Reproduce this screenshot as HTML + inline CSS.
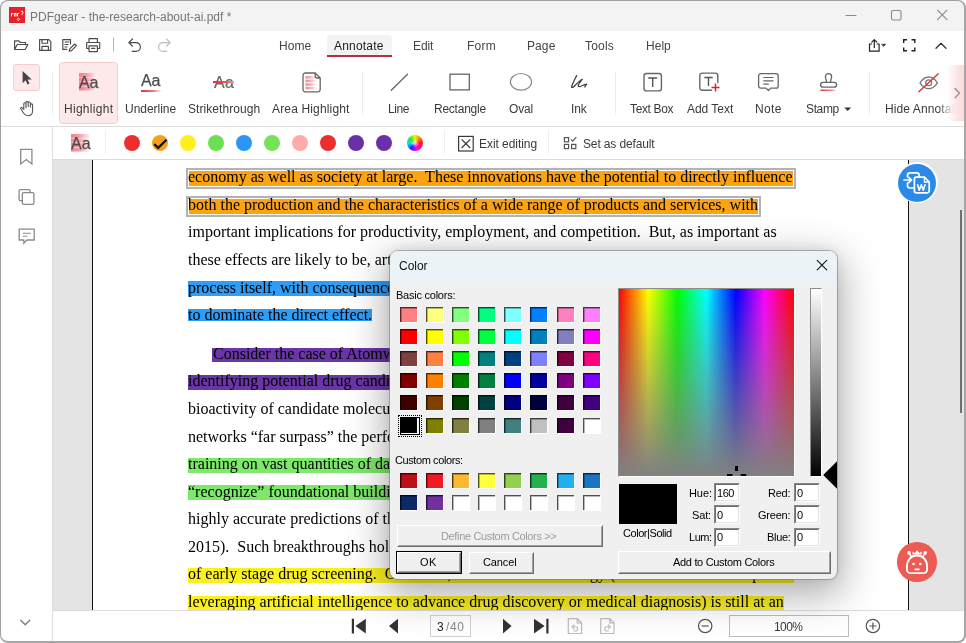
<!DOCTYPE html>
<html>
<head>
<meta charset="utf-8">
<title>PDFgear</title>
<style>
html,body{margin:0;padding:0;background:#fff;}
body{width:966px;height:643px;overflow:hidden;position:relative;font-family:"Liberation Sans",sans-serif;}
#win{position:absolute;left:0;top:0;width:966px;height:643px;background:#fff;overflow:hidden;}
.a{position:absolute;}
.t{position:absolute;white-space:pre;line-height:normal;will-change:transform;}
svg{position:absolute;left:0;top:0;overflow:visible;}
.sw{position:absolute;width:17px;height:15px;box-shadow:inset 1px 1px 0 rgba(0,0,0,.56),inset 2px 2px 0 rgba(0,0,0,.28),1px 1px 0 #fff;}
.inp{position:absolute;box-sizing:border-box;background:#fff;border:1px solid;border-color:#868686 #fdfdfd #fdfdfd #868686;}
.inp i{position:absolute;left:0;top:0;right:0;bottom:0;border:1px solid;border-color:#6a6a6a #e4e4e4 #e4e4e4 #6a6a6a;}
.btn{position:absolute;box-sizing:border-box;background:#f0f0f0;border:1px solid;border-color:#fff #6d6d6d #6d6d6d #fff;}
.btn i{position:absolute;left:0;top:0;right:0;bottom:0;border:1px solid;border-color:#f0f0f0 #a0a0a0 #a0a0a0 #f0f0f0;}
</style>
</head>
<body>
<div id="win">
<div class="a" style="left:0;top:0;width:966px;height:31px;background:#f3f3f3"></div><div class="a" style="left:9px;top:7px;width:16px;height:16px;background:#e3202b"></div><div class="t" style="left:29.80px;top:9.60px;font-size:12px;color:#767676;letter-spacing:-0.003px;font-family:'Liberation Sans',sans-serif;">PDFgear - the-research-about-ai.pdf *</div><div class="a" style="left:327px;top:34.500px;width:65px;height:22px;background:#f3f3f3;border-radius:4px 4px 0 0"></div><div class="a" style="left:327px;top:54.800px;width:65px;height:2.200px;background:#b5303c"></div><div class="t" style="left:279.30px;top:39.00px;font-size:12px;color:#444;letter-spacing:0.095px;font-family:'Liberation Sans',sans-serif;">Home</div><div class="t" style="left:334.30px;top:39.00px;font-size:12px;color:#1c1c1c;letter-spacing:0.183px;font-family:'Liberation Sans',sans-serif;">Annotate</div><div class="t" style="left:413.30px;top:39.00px;font-size:12px;color:#444;letter-spacing:-0.124px;font-family:'Liberation Sans',sans-serif;">Edit</div><div class="t" style="left:467.30px;top:39.00px;font-size:12px;color:#444;letter-spacing:0.267px;font-family:'Liberation Sans',sans-serif;">Form</div><div class="t" style="left:527.30px;top:39.00px;font-size:12px;color:#444;letter-spacing:0.095px;font-family:'Liberation Sans',sans-serif;">Page</div><div class="t" style="left:585.30px;top:39.00px;font-size:12px;color:#444;letter-spacing:0.196px;font-family:'Liberation Sans',sans-serif;">Tools</div><div class="t" style="left:646.30px;top:39.00px;font-size:12px;color:#444;letter-spacing:0.038px;font-family:'Liberation Sans',sans-serif;">Help</div><div class="a" style="left:13px;top:64px;width:27px;height:27px;box-sizing:border-box;background:#fde9e9;border:1px solid #f6cccc;border-radius:3px"></div><div class="a" style="left:59px;top:62px;width:59px;height:62px;box-sizing:border-box;background:#fde9e9;border:1px solid #f6cdcd;border-radius:4px"></div><div class="a" style="left:52px;top:72px;width:1px;height:43px;background:#ececec"></div><div class="a" style="left:362px;top:72px;width:1px;height:43px;background:#ececec"></div><div class="a" style="left:614.5px;top:72px;width:1px;height:43px;background:#ececec"></div><div class="a" style="left:869px;top:72px;width:1px;height:43px;background:#ececec"></div><div class="a" style="left:0;top:126px;width:966px;height:1px;background:#dcdcdc"></div><div class="a" style="left:78.600px;top:73.200px;width:18px;height:18px;background:linear-gradient(to right,rgba(255,255,255,0) 0%,rgba(255,255,255,.25) 45%,rgba(255,255,255,.92) 100%),repeating-linear-gradient(to bottom,#f4808c 0px,#f4808c 3.6px,#f9b4bb 3.6px,#f9b4bb 4.6px)"></div><div class="t" style="left:78.90px;top:73.50px;font-size:16px;color:#4c4c4c;letter-spacing:-0.078px;font-family:'Liberation Sans',sans-serif;-webkit-text-stroke:.25px #4c4c4c;">Aa</div><div class="t" style="left:141.30px;top:72.30px;font-size:16px;color:#4c4c4c;letter-spacing:-0.178px;font-family:'Liberation Sans',sans-serif;-webkit-text-stroke:.25px #4c4c4c;">Aa</div><div class="a" style="left:141px;top:90px;width:20px;height:2px;background:linear-gradient(to right,#e0303c 0%,#ee7a82 60%,rgba(250,200,204,.3) 100%)"></div><div class="t" style="left:214.30px;top:73.80px;font-size:16px;color:#666;letter-spacing:0.222px;font-family:'Liberation Sans',sans-serif;-webkit-text-stroke:.2px #666;">Aa</div><div class="a" style="left:213px;top:81.3px;width:21px;height:1.6px;background:linear-gradient(to right,#e0303c 0%,#e9606a 70%,#f3a2a8 100%)"></div><div class="t" style="left:63.90px;top:101.80px;font-size:12px;color:#3a3a3a;letter-spacing:0.287px;font-family:'Liberation Sans',sans-serif;">Highlight</div><div class="t" style="left:125.10px;top:101.80px;font-size:12px;color:#3a3a3a;letter-spacing:-0.022px;font-family:'Liberation Sans',sans-serif;">Underline</div><div class="t" style="left:188.00px;top:101.80px;font-size:12px;color:#3a3a3a;letter-spacing:0.062px;font-family:'Liberation Sans',sans-serif;">Strikethrough</div><div class="t" style="left:272.00px;top:101.80px;font-size:12px;color:#3a3a3a;letter-spacing:0.156px;font-family:'Liberation Sans',sans-serif;">Area Highlight</div><div class="t" style="left:388.30px;top:101.80px;font-size:12px;color:#3a3a3a;letter-spacing:-0.462px;font-family:'Liberation Sans',sans-serif;">Line</div><div class="t" style="left:434.00px;top:101.80px;font-size:12px;color:#3a3a3a;letter-spacing:-0.241px;font-family:'Liberation Sans',sans-serif;">Rectangle</div><div class="t" style="left:508.60px;top:101.80px;font-size:12px;color:#3a3a3a;letter-spacing:-0.191px;font-family:'Liberation Sans',sans-serif;">Oval</div><div class="t" style="left:571.00px;top:101.80px;font-size:12px;color:#3a3a3a;letter-spacing:-0.150px;font-family:'Liberation Sans',sans-serif;">Ink</div><div class="t" style="left:630.20px;top:101.80px;font-size:12px;color:#3a3a3a;letter-spacing:-0.357px;font-family:'Liberation Sans',sans-serif;">Text Box</div><div class="t" style="left:686.80px;top:101.80px;font-size:12px;color:#3a3a3a;letter-spacing:-0.036px;font-family:'Liberation Sans',sans-serif;">Add Text</div><div class="t" style="left:754.80px;top:101.80px;font-size:12px;color:#3a3a3a;letter-spacing:0.352px;font-family:'Liberation Sans',sans-serif;">Note</div><div class="t" style="left:805.80px;top:101.80px;font-size:12px;color:#3a3a3a;letter-spacing:-0.368px;font-family:'Liberation Sans',sans-serif;">Stamp</div><div class="t" style="left:885.00px;top:101.80px;font-size:12px;color:#3a3a3a;letter-spacing:0.092px;font-family:'Liberation Sans',sans-serif;">Hide Annotations</div><div class="a" style="left:938px;top:65px;width:27px;height:56px;background:linear-gradient(to right,rgba(255,255,255,0) 0%,rgba(255,255,255,.5) 30%,rgba(254,242,242,.9) 50%,#fce4e4 72%,#fbd9d9 100%)"></div><svg width="966" height="643" viewBox="0 0 966 643" fill="none" stroke-linecap="round" stroke-linejoin="round"><g stroke="#fff" stroke-width="1" fill="none"><path d="M11.5 16v-2.5h1.5M14.5 16v-2.5h1M16 13.5v2.5M17.5 16v-2.5h1.2"/><path d="M21 11.5a1.2 1.2 0 1 1 1 2v1.3" stroke="#fbe9b0"/><path d="M17.3 19.2l1.2-1.2 1.2 1.2-1.2 1.2z" stroke-width=".8"/></g><g stroke="#8a8a8a" stroke-width="1.1"><path d="M846 15.5h10"/><rect x="891.5" y="10.5" width="9.5" height="9.5" rx="1.6"/><path d="M937.5 10.2l9.5 9.5M947 10.2l-9.5 9.5"/></g><g stroke="#4a4a4a" stroke-width="1.15"><path d="M14.6 49.5v-8.6h4.2l1.5 1.6h5.2v2.2M14.6 49.5l2.6-5h10.6l-2.6 5z"/><path d="M39.6 39.6h9.2l2 2v8.8h-11.2zM42 39.8v3.4h5.6v-3.4M42 50.2v-3.8h6.4v3.8"/><path d="M70.5 44v-4.4h-7.7v9.8h4M65 42h4M65 44.5h3M65 47h2"/><path d="M69.2 51.2l.6-2.3 4.9-4.9 1.7 1.7-4.9 4.9z"/><path d="M89 42.5v-3.9h8.4v3.9M89 48.5h-2.3v-6h13v6h-2.3M89 45.8h8.4v5.8h-8.4zM91.5 48.3h3.4"/></g><path d="M113.5 38v13" stroke="#b5b5b5" stroke-width="1"/><path d="M132.5 39l-3.7 3.6 3.7 3.6M129 42.6h7a4.4 4.4 0 0 1 0 8.8h-3.8" stroke="#4a4a4a" stroke-width="1.2"/><path d="M166.5 39l3.7 3.6-3.7 3.6M170 42.6h-7a4.4 4.4 0 0 0 0 8.8h3.8" stroke="#bdbdbd" stroke-width="1.2"/><g stroke="#222" stroke-width="1.2"><path d="M871.5 44h-2v7.2h9.6V44h-2M874.3 47.5V39.8M871.8 42.2l2.5-2.6 2.5 2.6"/><path d="M882 44.2h3.6l-1.8 2z" fill="#222" stroke-width=".6"/></g><g stroke="#222" stroke-width="1.4" stroke-linecap="butt" stroke-linejoin="miter"><path d="M903.7 43v-3.3h3.3M911.5 39.7h3.3V43M914.8 47.5v3.3h-3.3M907 50.8h-3.3v-3.3"/></g><path d="M936 48.3l5-5 5 5" stroke="#333" stroke-width="1.3"/><path d="M22.6 71v12.2l3-2.9 1.9 4.2 2-.9-1.9-4.1h4.1z" fill="#444" stroke="none"/><g stroke="#555" stroke-width="1.1"><path d="M23.8 109.5v-5.7a1.1 1.1 0 0 1 2.2 0v4M26 106.5v-4a1.1 1.1 0 0 1 2.2 0v4M28.2 106.5v-3.4a1.1 1.1 0 0 1 2.2 0v3.9M30.4 107v-2a1.1 1.1 0 0 1 2.2 0v5.5c0 3-1.8 5.2-4.6 5.200-2.400 0-3.400-.8-4.600-2.700l-2.600-4.200c-.5-1 .7-1.900 1.600-1l1.400 1.700"/></g><g><rect x="305.5" y="76" width="11" height="2.6" fill="url(#pk)"/><rect x="305.5" y="79.6" width="12" height="2.6" fill="url(#pk)"/><rect x="305.5" y="83.2" width="12" height="2.6" fill="url(#pk)"/><rect x="305.5" y="86.8" width="12" height="2.6" fill="url(#pk)"/></g><defs><linearGradient id="pk" x1="0" x2="1" y1="0" y2="0"><stop offset="0" stop-color="#f18792"/><stop offset=".5" stop-color="#f8b9c0"/><stop offset=".85" stop-color="#fef0f1"/><stop offset="1" stop-color="#ffffff"/></linearGradient></defs><path d="M315.200 73h-10a2.200 2.200 0 0 0-2.200 2.200v14.400a2.200 2.200 0 0 0 2.200 2.200h12.800a2.200 2.200 0 0 0 2.200-2.200V78zM315.200 73v3a2 2 0 0 0 2 2h3" stroke="#666" stroke-width="1.3"/><path d="M391.3 90.300l16.200-16" stroke="#666" stroke-width="1.3"/><rect x="450" y="74.200" width="19.300" height="15.700" stroke="#666" stroke-width="1.3" stroke-linejoin="miter"/><ellipse cx="521" cy="81.800" rx="10.600" ry="8.300" stroke="#8a8a8a" stroke-width="1.2"/><path d="M576.600 75.600C574.500 80 572 84.500 571.500 87C571.600 88 573.500 87.300 575 85.500C577.500 83 580 80.500 582.200 79.300C580.500 81.500 578.300 84 578.200 85.600C578.300 87 580.500 86.600 582 85.800C583.500 85 585.300 84.300 586.600 84.200C585.800 85 585.200 86 584.800 87" stroke="#444" stroke-width="1.300"/><rect x="644" y="73.500" width="17.400" height="17.400" rx="2.400" stroke="#666" stroke-width="1.4"/><path d="M648.200 78h9M652.700 78v9" stroke="#555" stroke-width="1.4" stroke-linecap="butt"/><path d="M711.500 90.300h-9.300a2.400 2.400 0 0 1-2.400-2.400v-12.400a2.400 2.400 0 0 1 2.400-2.400h13.200a2.400 2.400 0 0 1 2.400 2.400v7" stroke="#666" stroke-width="1.4"/><path d="M704.300 77.500h8.400M708.500 77.500v8.500" stroke="#555" stroke-width="1.400" stroke-linecap="butt"/><path d="M715.500 83.500v8M711.500 87.500h8" stroke="#e0202c" stroke-width="1.500" stroke-linecap="butt"/><path d="M760.800 73.700h15.200a2.200 2.200 0 0 1 2.200 2.200v10a2.200 2.200 0 0 1-2.200 2.200h-5.300l-2.300 2.400-2.300-2.400h-5.300a2.200 2.200 0 0 1-2.200-2.200v-10a2.200 2.200 0 0 1 2.200-2.200z" stroke="#666" stroke-width="1.300"/><path d="M763.300 77.500h10.200M763.300 80.800h10.200M763.300 84.100h5.500" stroke="#666" stroke-width="1.200" stroke-linecap="butt"/><path d="M826.300 82.300c.6-2.300-.9-3.300-.9-5.600a3.100 3.100 0 0 1 6.200 0c0 2.300-1.500 3.300-.9 5.600M823 87.200h11.200a2.400 2.400 0 0 0 0-4.900h-11.200a2.400 2.400 0 0 0 0 4.900z" stroke="#666" stroke-width="1.300"/><path d="M820.500 90.300h14.500" stroke="url(#pk2)" stroke-width="1.500" stroke-linecap="butt"/><defs><linearGradient id="pk2" gradientUnits="userSpaceOnUse" x1="820" x2="836" y1="0" y2="0"><stop offset="0" stop-color="#e0303c"/><stop offset=".6" stop-color="#ec707a"/><stop offset="1" stop-color="#fbd0d4"/></linearGradient></defs><path d="M844.300 107.400h6.800l-3.400 3.700z" fill="#333" stroke="none"/><path d="M920 82.800c2.600-4 5.600-5.800 8.700-5.800s6.100 1.800 8.700 5.800c-2.600 4-5.600 5.800-8.700 5.800s-6.100-1.800-8.700-5.800z" stroke="#777" stroke-width="1.300"/><circle cx="928.700" cy="82.800" r="2.900" stroke="#777" stroke-width="1.300"/><path d="M918.800 91.700l19.500-18" stroke="#e0303c" stroke-width="1.400"/></svg><div class="a" style="left:52px;top:127px;width:1px;height:516px;background:#dedede"></div><div class="a" style="left:53px;top:159px;width:912px;height:451px;background:#e4e4e4;overflow:hidden"><div class="a" style="left:38.5px;top:-20px;width:817.5px;height:500px;background:#fff;box-sizing:border-box;border-left:1.5px solid #141414;border-right:1.5px solid #141414"></div><div class="a" style="left:133px;top:9px;width:610px;height:21px;background:#fffdf6;box-sizing:border-box;border:2px solid #b3b3b3"></div><div class="a" style="left:133px;top:36.6px;width:574.7px;height:21px;background:#fffdf6;box-sizing:border-box;border:2px solid #b3b3b3"></div><div class="a" style="left:135.6px;top:11.9px;width:604.5px;height:15.2px;background:#fca311"></div><div class="a" style="left:135.6px;top:39.5px;width:569.2px;height:15.2px;background:#fca311"></div><div class="a" style="left:135px;top:122.32px;width:232px;height:14.3px;background:#2e9df7"></div><div class="a" style="left:135px;top:150.2px;width:184px;height:11.6px;background:#2e9df7"></div><div class="a" style="left:159px;top:188.5px;width:208px;height:14.2px;background:#6a35a8"></div><div class="a" style="left:135px;top:216.18px;width:232px;height:14.7px;background:#6a35a8"></div><div class="a" style="left:135px;top:298.82px;width:232px;height:14.7px;background:#7de86a"></div><div class="a" style="left:135px;top:326.4px;width:232px;height:14.5px;background:#7de86a"></div><div class="a" style="left:135px;top:409.04px;width:606px;height:14.8px;background:#fbf01f"></div><div class="a" style="left:135px;top:436.82px;width:596px;height:14.3px;background:#fbf01f"></div><div class="t" style="left:135.40px;top:9.30px;font-size:16px;color:#000;letter-spacing:0.000px;font-family:'Liberation Serif',serif;">economy as well as society at large.  These innovations have the potential to directly influence</div><div class="t" style="left:135.40px;top:36.88px;font-size:16px;color:#000;letter-spacing:0.000px;font-family:'Liberation Serif',serif;">both the production and the characteristics of a wide range of products and services, with</div><div class="t" style="left:135.40px;top:64.46px;font-size:16px;color:#000;letter-spacing:0.000px;font-family:'Liberation Serif',serif;">important implications for productivity, employment, and competition.  But, as important as</div><div class="t" style="left:135.40px;top:92.04px;font-size:16px;color:#000;letter-spacing:0.000px;font-family:'Liberation Serif',serif;">these effects are likely to be, artificial intelligence also has the potential to change the innovation</div><div class="t" style="left:135.40px;top:119.62px;font-size:16px;color:#000;letter-spacing:0.000px;font-family:'Liberation Serif',serif;">process itself, with consequences that may be equally profound, and which may, over time, come</div><div class="t" style="left:135.40px;top:147.20px;font-size:16px;color:#000;letter-spacing:0.000px;font-family:'Liberation Serif',serif;">to dominate the direct effect.</div><div class="t" style="left:159.90px;top:185.80px;font-size:16px;color:#000;letter-spacing:0.000px;font-family:'Liberation Serif',serif;">Consider the case of Atomwise, a startup firm which is developing novel technology for</div><div class="t" style="left:135.40px;top:213.38px;font-size:16px;color:#000;letter-spacing:0.000px;font-family:'Liberation Serif',serif;">identifying potential drug candidates (and insecticides) by using neural networks to predict the</div><div class="t" style="left:135.40px;top:240.96px;font-size:16px;color:#000;letter-spacing:0.000px;font-family:'Liberation Serif',serif;">bioactivity of candidate molecules.  The company reports that its deep convolutional neural</div><div class="t" style="left:135.40px;top:268.54px;font-size:16px;color:#000;letter-spacing:0.000px;font-family:'Liberation Serif',serif;">networks “far surpass” the performance of conventional “docking” algorithms.  After appropriate</div><div class="t" style="left:135.40px;top:296.12px;font-size:16px;color:#000;letter-spacing:0.000px;font-family:'Liberation Serif',serif;">training on vast quantities of data, the company’s AtomNet product is described as being able to</div><div class="t" style="left:135.40px;top:323.70px;font-size:16px;color:#000;letter-spacing:0.000px;font-family:'Liberation Serif',serif;">“recognize” foundational building blocks of organic chemistry, and is capable of generating</div><div class="t" style="left:135.40px;top:351.28px;font-size:16px;color:#000;letter-spacing:0.000px;font-family:'Liberation Serif',serif;">highly accurate predictions of the outcomes of real-world physical experiments (Wallach et al.,</div><div class="t" style="left:135.40px;top:378.86px;font-size:16px;color:#000;letter-spacing:0.000px;font-family:'Liberation Serif',serif;">2015).  Such breakthroughs hold out the possibility of substantial improvements in the productivity</div><div class="t" style="left:135.40px;top:406.44px;font-size:16px;color:#000;letter-spacing:0.000px;font-family:'Liberation Serif',serif;">of early stage drug screening.  Of course, Atomwise’s technology (and that of other companies</div><div class="t" style="left:135.40px;top:434.02px;font-size:16px;color:#000;letter-spacing:0.000px;font-family:'Liberation Serif',serif;">leveraging artificial intelligence to advance drug discovery or medical diagnosis) is still at an</div></div><div class="a" style="left:960px;top:210px;width:2px;height:203px;background:#6e6e6e"></div><div class="a" style="left:896.600px;top:162px;width:41px;height:41px;border-radius:50%;background:#fff"></div><div class="a" style="left:898.100px;top:163.500px;width:38px;height:38.200px;border-radius:50%;background:#2b8ae8"></div><div class="a" style="left:897.300px;top:542.200px;width:39.500px;height:39.500px;border-radius:50%;background:#ec5b54"></div><div class="a" style="left:53px;top:127px;width:913px;height:32px;background:#fff"></div><div class="a" style="left:53px;top:159px;width:913px;height:1px;background:#dcdcdc"></div><div class="a" style="left:71.100px;top:134.200px;width:18.500px;height:18.200px;background:linear-gradient(to right,rgba(255,255,255,0) 0%,rgba(255,255,255,.25) 45%,rgba(255,255,255,.92) 100%),repeating-linear-gradient(to bottom,#f4808c 0px,#f4808c 3.6px,#f9b4bb 3.6px,#f9b4bb 4.6px)"></div><div class="t" style="left:71.10px;top:134.70px;font-size:16px;color:#4c4c4c;letter-spacing:0.022px;font-family:'Liberation Sans',sans-serif;-webkit-text-stroke:.25px #4c4c4c;">Aa</div><div class="a" style="left:105px;top:131px;width:1px;height:23px;background:#ededed"></div><div class="a" style="left:444.3px;top:131px;width:1px;height:23px;background:#ededed"></div><div class="a" style="left:548px;top:131px;width:1px;height:23px;background:#ededed"></div><div class="a" style="left:124px;top:135px;width:16px;height:16px;border-radius:50%;background:#ee2e2e"></div><div class="a" style="left:152px;top:135px;width:16px;height:16px;border-radius:50%;background:#f5a216"></div><div class="a" style="left:180px;top:135px;width:16px;height:16px;border-radius:50%;background:#ffee1e"></div><div class="a" style="left:208px;top:135px;width:16px;height:16px;border-radius:50%;background:#6cdf52"></div><div class="a" style="left:236px;top:135px;width:16px;height:16px;border-radius:50%;background:#2b96f3"></div><div class="a" style="left:264px;top:135px;width:16px;height:16px;border-radius:50%;background:#74e35a"></div><div class="a" style="left:292px;top:135px;width:16px;height:16px;border-radius:50%;background:#ffabab"></div><div class="a" style="left:320px;top:135px;width:16px;height:16px;border-radius:50%;background:#ee2e2e"></div><div class="a" style="left:348px;top:135px;width:16px;height:16px;border-radius:50%;background:#6b30a8"></div><div class="a" style="left:376px;top:135px;width:16px;height:16px;border-radius:50%;background:#6b30a8"></div><div class="a" style="left:407px;top:135px;width:16px;height:16px;border-radius:50%;background:radial-gradient(circle,rgba(255,255,255,.85) 0%,rgba(255,255,255,0) 38%),conic-gradient(from 0deg,#ffee00,#ff8800 12%,#ff1a1a 24%,#ff00ee 46%,#2222ff 60%,#00ddff 73%,#22ee22 87%,#ffee00)"></div><div class="t" style="left:479.00px;top:136.60px;font-size:12px;color:#3a3a3a;letter-spacing:-0.053px;font-family:'Liberation Sans',sans-serif;">Exit editing</div><div class="t" style="left:582.50px;top:136.60px;font-size:12px;color:#3a3a3a;letter-spacing:-0.134px;font-family:'Liberation Sans',sans-serif;">Set as default</div><div class="a" style="left:53px;top:610px;width:913px;height:33px;background:#fff"></div><div class="a" style="left:53px;top:610px;width:913px;height:1px;background:#dcdcdc"></div><div class="a" style="left:429.500px;top:615px;width:41px;height:21.500px;box-sizing:border-box;border:1px solid #d0d0d0;background:#fff"></div><div class="t" style="left:437.10px;top:619.50px;font-size:12px;color:#222;letter-spacing:0.328px;font-family:'Liberation Sans',sans-serif;">3</div><div class="t" style="left:445.80px;top:619.50px;font-size:12px;color:#8a8a8a;letter-spacing:0.614px;font-family:'Liberation Sans',sans-serif;">/40</div><div class="a" style="left:729px;top:615px;width:120px;height:21.500px;box-sizing:border-box;border:1px solid #bdbdbd;background:#fff"></div><div class="t" style="left:774.30px;top:619.50px;font-size:12px;color:#3a3a3a;letter-spacing:-0.562px;font-family:'Liberation Sans',sans-serif;">100%</div><svg width="966" height="643" viewBox="0 0 966 643" fill="none" stroke-linecap="round" stroke-linejoin="round"><path d="M955 88.500l4.500 4.700-4.500 4.700" stroke="#888" stroke-width="1.200"/><path d="M20.700 149.300h11.200v14.600l-5.600-4.300-5.600 4.300z" stroke="#8a8a8a" stroke-width="1.300" stroke-linejoin="miter"/><g stroke="#8a8a8a" stroke-width="1.300"><rect x="22.300" y="192.700" width="11.600" height="11.600" rx="1.200"/><path d="M22.300 200.600h-2a1.200 1.200 0 0 1-1.200-1.200v-8.600a1.200 1.200 0 0 1 1.200-1.200h8.600a1.200 1.200 0 0 1 1.200 1.200v1.900"/></g><g stroke="#8a8a8a" stroke-width="1.300"><path d="M19.200 229.200h15v10.800h-7.200l-3.200 3.200v-3.200h-4.600z" stroke-linejoin="miter"/><path d="M22.700 233.200h8M22.700 236.200h4.600" stroke-width="1.100" stroke-linecap="butt"/></g><path d="M20.700 620.300l4.500 4.500 4.500-4.500" stroke="#7a7a7a" stroke-width="1.300"/><path d="M154.200 144.200l4 3.700 8.300-8.200" stroke="#111" stroke-width="2.300" stroke-linecap="butt" stroke-linejoin="miter"/><rect x="458.600" y="136.400" width="14.600" height="14.600" stroke="#3a3a3a" stroke-width="1.200" stroke-linejoin="miter"/><path d="M461.600 139.400l8.600 8.600M470.200 139.400l-8.600 8.600" stroke="#3a3a3a" stroke-width="1.200" stroke-linecap="butt"/><g stroke="#555" stroke-width="1.200" stroke-linejoin="miter"><rect x="564.400" y="137.600" width="4.200" height="4.200"/><rect x="564.400" y="144.400" width="4.200" height="4.200"/><rect x="571.600" y="144.400" width="4.200" height="4.200"/><path d="M571 139.300l1.700 1.800 3.600-3.900" stroke-linecap="butt"/></g><g fill="#333" stroke="none"><rect x="351.800" y="618.700" width="2.200" height="14.800"/><path d="M365.800 618.700v14.800l-10.400-7.400z"/><path d="M398 618.700v14.800l-9-7.400z"/><path d="M503 618.700v14.800l8.600-7.400z"/><path d="M534 618.700v14.800l10.600-7.400z"/><rect x="546.300" y="618.700" width="2.200" height="14.800"/></g><g stroke="#bcbcbc" stroke-width="1.200"><path d="M568.300 618.600h9l4.300 4.300v10.600h-13.300zM577.300 618.600v4.300h4.300"/><path d="M574 624.800l-2 2 2 2M572.200 626.800h3.300a2.100 2.100 0 0 1 0 4.200h-1.600" stroke-width="1.100"/><path d="M600.700 618.600h9l4.300 4.300v10.600h-13.300zM609.700 618.600v4.300h4.300"/><path d="M608.300 624.800l2 2-2 2M610.100 626.800h-3.300a2.100 2.100 0 0 0 0 4.200h1.600" stroke-width="1.100"/></g><g stroke="#555" stroke-width="1.200"><circle cx="705.200" cy="626" r="6.700"/><path d="M701.700 626h7" stroke-linecap="butt"/><circle cx="872.900" cy="626" r="6.700"/><path d="M869.400 626h7M872.900 622.500v7" stroke-linecap="butt"/></g><g stroke="#fff" stroke-width="1.700"><path d="M907.500 177v-1.800a2.400 2.400 0 0 1 2.400-2.400h6.800a2.400 2.400 0 0 1 2.400 2.400v1.500M907.500 183.200v2.400a2.400 2.400 0 0 0 2.400 2.400h3.500"/><path d="M904 180h7.300M908.800 177.300l2.800 2.700-2.800 2.700"/><path d="M916.200 177.200h8.200l4.800 4.800v9a1.800 1.800 0 0 1-1.800 1.800h-11.200a1.800 1.800 0 0 1-1.800-1.800v-12a1.800 1.800 0 0 1 1.800-1.800z" fill="#2b8ae8"/><path d="M924.400 177.200v4.800h4.800" stroke-width="1.300"/><path d="M917.600 184.800l1.700 5.400 2-5.400 2 5.400 1.700-5.400" stroke-width="1.600"/></g><path d="M906.900 567c0-7 4-11.500 10.100-11.500s10.100 4.500 10.100 11.500v2.500a3.600 3.600 0 0 1-3.600 3.600h-13a3.600 3.600 0 0 1-3.600-3.600z" stroke="#fff" stroke-width="1.900"/><g fill="#fff" stroke="none"><circle cx="909" cy="552.900" r="1.800"/><circle cx="925.200" cy="552.900" r="1.800"/><path d="M912.500 554.500v-3l2.300 1.500 2.300-2.700 2.300 2.700 2.300-1.500v3z"/><circle cx="913.500" cy="564" r="1.350"/><circle cx="920.300" cy="564" r="1.350"/><rect x="914.400" y="568.400" width="5.200" height="1.900" rx=".4"/></g><path d="M909.600 554l2 3M924.600 554l-2 3" stroke="#fff" stroke-width="1.500"/></svg><div class="a" style="left:390px;top:251px;width:447px;height:327.5px;border-radius:8px;box-shadow:0 0 0 1px rgba(120,120,120,.55),0 12px 38px 6px rgba(0,0,0,.30),0 0 14px rgba(0,0,0,.10);background:#f0f0f0;overflow:hidden"><div class="a" style="left:0;top:0;width:100%;height:36px;background:linear-gradient(to bottom,#ebf3f7 0%,#ebf3f7 72%,#f0f0f0 100%)"></div></div><div class="t" style="left:399.00px;top:259.00px;font-size:12px;color:#111;letter-spacing:-0.022px;font-family:'Liberation Sans',sans-serif;">Color</div><div class="t" style="left:395.80px;top:289.30px;font-size:11px;color:#000;letter-spacing:-0.240px;font-family:'Liberation Sans',sans-serif;">Basic colors:</div><div class="t" style="left:395.30px;top:454.00px;font-size:11px;color:#000;letter-spacing:-0.406px;font-family:'Liberation Sans',sans-serif;">Custom colors:</div><div class="sw" style="left:400px;top:307px;background:#FF8080"></div><div class="sw" style="left:426px;top:307px;background:#FFFF80"></div><div class="sw" style="left:452px;top:307px;background:#80FF80"></div><div class="sw" style="left:478px;top:307px;background:#00FF80"></div><div class="sw" style="left:504px;top:307px;background:#80FFFF"></div><div class="sw" style="left:530px;top:307px;background:#0080FF"></div><div class="sw" style="left:557px;top:307px;background:#FF80C0"></div><div class="sw" style="left:583px;top:307px;background:#FF80FF"></div><div class="sw" style="left:400px;top:329px;background:#FF0000"></div><div class="sw" style="left:426px;top:329px;background:#FFFF00"></div><div class="sw" style="left:452px;top:329px;background:#80FF00"></div><div class="sw" style="left:478px;top:329px;background:#00FF40"></div><div class="sw" style="left:504px;top:329px;background:#00FFFF"></div><div class="sw" style="left:530px;top:329px;background:#0080C0"></div><div class="sw" style="left:557px;top:329px;background:#8080C0"></div><div class="sw" style="left:583px;top:329px;background:#FF00FF"></div><div class="sw" style="left:400px;top:351px;background:#804040"></div><div class="sw" style="left:426px;top:351px;background:#FF8040"></div><div class="sw" style="left:452px;top:351px;background:#00FF00"></div><div class="sw" style="left:478px;top:351px;background:#008080"></div><div class="sw" style="left:504px;top:351px;background:#004080"></div><div class="sw" style="left:530px;top:351px;background:#8080FF"></div><div class="sw" style="left:557px;top:351px;background:#800040"></div><div class="sw" style="left:583px;top:351px;background:#FF0080"></div><div class="sw" style="left:400px;top:373px;background:#800000"></div><div class="sw" style="left:426px;top:373px;background:#FF8000"></div><div class="sw" style="left:452px;top:373px;background:#008000"></div><div class="sw" style="left:478px;top:373px;background:#008040"></div><div class="sw" style="left:504px;top:373px;background:#0000FF"></div><div class="sw" style="left:530px;top:373px;background:#0000A0"></div><div class="sw" style="left:557px;top:373px;background:#800080"></div><div class="sw" style="left:583px;top:373px;background:#8000FF"></div><div class="sw" style="left:400px;top:395px;background:#400000"></div><div class="sw" style="left:426px;top:395px;background:#804000"></div><div class="sw" style="left:452px;top:395px;background:#004000"></div><div class="sw" style="left:478px;top:395px;background:#004040"></div><div class="sw" style="left:504px;top:395px;background:#000080"></div><div class="sw" style="left:530px;top:395px;background:#000040"></div><div class="sw" style="left:557px;top:395px;background:#400040"></div><div class="sw" style="left:583px;top:395px;background:#400080"></div><div class="sw" style="left:400px;top:418px;background:#000000"></div><div class="sw" style="left:426px;top:418px;background:#808000"></div><div class="sw" style="left:452px;top:418px;background:#808040"></div><div class="sw" style="left:478px;top:418px;background:#808080"></div><div class="sw" style="left:504px;top:418px;background:#408080"></div><div class="sw" style="left:530px;top:418px;background:#C0C0C0"></div><div class="sw" style="left:557px;top:418px;background:#400040"></div><div class="sw" style="left:583px;top:418px;background:#FFFFFF"></div><div class="sw" style="left:400px;top:473px;background:#C00E1A"></div><div class="sw" style="left:426px;top:473px;background:#F01C24"></div><div class="sw" style="left:452px;top:473px;background:#FBB933"></div><div class="sw" style="left:478px;top:473px;background:#FFFF42"></div><div class="sw" style="left:504px;top:473px;background:#92D050"></div><div class="sw" style="left:530px;top:473px;background:#22B14C"></div><div class="sw" style="left:557px;top:473px;background:#22B1EE"></div><div class="sw" style="left:583px;top:473px;background:#1B75C5"></div><div class="sw" style="left:400px;top:495px;background:#0C2B66"></div><div class="sw" style="left:426px;top:495px;background:#7030A0"></div><div class="sw" style="left:452px;top:495px;background:#FFFFFF"></div><div class="sw" style="left:478px;top:495px;background:#FFFFFF"></div><div class="sw" style="left:504px;top:495px;background:#FFFFFF"></div><div class="sw" style="left:530px;top:495px;background:#FFFFFF"></div><div class="sw" style="left:557px;top:495px;background:#FFFFFF"></div><div class="sw" style="left:583px;top:495px;background:#FFFFFF"></div><div class="a" style="left:397.500px;top:414.500px;width:24px;height:22px;box-sizing:border-box;border:1px dotted #000"></div><div class="a" style="left:399.500px;top:416.500px;width:20px;height:18px;box-sizing:border-box;border:1px solid #000"></div><div class="btn" style="left:396.500px;top:525px;width:206.500px;height:22px"><i></i></div><div class="t" style="left:440.80px;top:530.30px;font-size:11px;color:#9b9b9b;letter-spacing:-0.351px;font-family:'Liberation Sans',sans-serif;">Define Custom Colors &gt;&gt;</div><div class="a" style="left:396px;top:551px;width:65.500px;height:22.500px;box-sizing:border-box;border:1px solid #000"></div><div class="btn" style="left:397px;top:552px;width:63.500px;height:20.500px"><i></i></div><div class="t" style="left:419.80px;top:555.50px;font-size:11px;color:#000;letter-spacing:0.394px;font-family:'Liberation Sans',sans-serif;">OK</div><div class="btn" style="left:468.500px;top:551.500px;width:65.500px;height:22px"><i></i></div><div class="t" style="left:482.90px;top:555.50px;font-size:11px;color:#000;letter-spacing:-0.110px;font-family:'Liberation Sans',sans-serif;">Cancel</div><div class="btn" style="left:618px;top:551px;width:213px;height:22.500px"><i></i></div><div class="t" style="left:673.10px;top:555.80px;font-size:11px;color:#000;letter-spacing:-0.313px;font-family:'Liberation Sans',sans-serif;">Add to Custom Colors</div><div class="a" style="left:617.500px;top:287.500px;width:177px;height:189px;box-sizing:border-box;border:1px solid;border-color:#8c8c8c #fff #fff #8c8c8c"></div><div class="a" style="left:618.500px;top:288.500px;width:175px;height:187px;background:linear-gradient(to bottom,rgba(128,128,128,0) 0%,rgba(128,128,128,1) 100%),linear-gradient(to right,#ff0000 0%,#ffff00 16.67%,#00ff00 33.33%,#00ffff 50%,#0000ff 66.67%,#ff00ff 83.33%,#ff0000 100%)"></div><div class="a" style="left:810px;top:287.500px;width:11.500px;height:189px;box-sizing:border-box;border:1px solid;border-color:#8c8c8c #fff #fff #8c8c8c;background:linear-gradient(to bottom,#fff,#000)"></div><div class="a" style="left:618.500px;top:483.500px;width:58.500px;height:40.500px;background:#000"></div><div class="t" style="left:623.30px;top:527.20px;font-size:11px;color:#000;letter-spacing:-0.441px;font-family:'Liberation Sans',sans-serif;">Color|Solid</div><div class="t" style="left:688.50px;top:487.00px;font-size:11px;color:#000;letter-spacing:-0.083px;font-family:'Liberation Sans',sans-serif;">Hue:</div><div class="t" style="left:692.30px;top:509.20px;font-size:11px;color:#000;letter-spacing:-0.131px;font-family:'Liberation Sans',sans-serif;">Sat:</div><div class="t" style="left:688.50px;top:531.40px;font-size:11px;color:#000;letter-spacing:-0.490px;font-family:'Liberation Sans',sans-serif;">Lum:</div><div class="t" style="left:767.90px;top:487.00px;font-size:11px;color:#000;letter-spacing:-0.250px;font-family:'Liberation Sans',sans-serif;">Red:</div><div class="t" style="left:757.80px;top:509.20px;font-size:11px;color:#000;letter-spacing:-0.211px;font-family:'Liberation Sans',sans-serif;">Green:</div><div class="t" style="left:766.60px;top:531.40px;font-size:11px;color:#000;letter-spacing:-0.323px;font-family:'Liberation Sans',sans-serif;">Blue:</div><div class="inp" style="left:714px;top:483px;width:26px;height:19px"><i></i></div><div class="t" style="left:716.80px;top:487.00px;font-size:11px;color:#000;letter-spacing:0.000px;font-family:'Liberation Sans',sans-serif;letter-spacing:-0.45px;">160</div><div class="inp" style="left:714px;top:505px;width:26px;height:19px"><i></i></div><div class="t" style="left:716.80px;top:509.20px;font-size:11px;color:#000;letter-spacing:0.000px;font-family:'Liberation Sans',sans-serif;letter-spacing:-0.45px;">0</div><div class="inp" style="left:714px;top:528px;width:26px;height:19px"><i></i></div><div class="t" style="left:716.80px;top:531.40px;font-size:11px;color:#000;letter-spacing:0.000px;font-family:'Liberation Sans',sans-serif;letter-spacing:-0.45px;">0</div><div class="inp" style="left:794px;top:483px;width:26px;height:19px"><i></i></div><div class="t" style="left:796.50px;top:487.00px;font-size:11px;color:#000;letter-spacing:0.000px;font-family:'Liberation Sans',sans-serif;">0</div><div class="inp" style="left:794px;top:505px;width:26px;height:19px"><i></i></div><div class="t" style="left:796.50px;top:509.20px;font-size:11px;color:#000;letter-spacing:0.000px;font-family:'Liberation Sans',sans-serif;">0</div><div class="inp" style="left:794px;top:528px;width:26px;height:19px"><i></i></div><div class="t" style="left:796.50px;top:531.40px;font-size:11px;color:#000;letter-spacing:0.000px;font-family:'Liberation Sans',sans-serif;">0</div><svg width="966" height="643" viewBox="0 0 966 643" fill="none"><path d="M817.200 260.300l9.500 9.500M826.700 260.300l-9.500 9.500" stroke="#111" stroke-width="1.100" stroke-linecap="round"/><path d="M823.200 475l13.800-13.800v27.600z" fill="#000"/><g fill="#000"><rect x="735" y="466" width="3" height="5"/><rect x="727" y="474" width="5.500" height="2"/><rect x="740.700" y="474" width="5.500" height="2"/></g></svg><div class="a" style="left:0;top:0;width:966px;height:643px;box-sizing:border-box;border-style:solid;border-width:1px 2px 2px 1px;border-color:#a0a0a0 #a6a6a6 #a6a6a6 #a0a0a0;border-radius:8px;box-shadow:0 0 0 12px #fff;pointer-events:none"></div></div></body></html>
